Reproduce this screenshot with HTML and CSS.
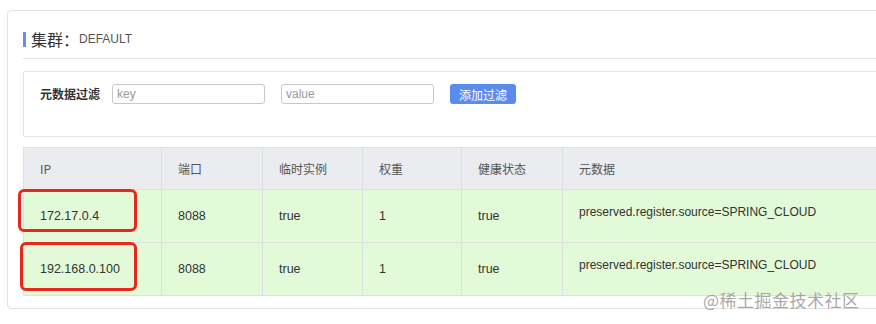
FILE: index.html
```html
<!DOCTYPE html>
<html lang="zh-CN">
<head>
    <meta charset="UTF-8">
    <title>集群详情</title>
    <link rel="stylesheet" href="styles.css">
</head>
<body>
    <div class="panel">
        <div class="cluster-title">
            <span class="bar"></span>
            <span class="label">集群：</span>
            <span class="name">DEFAULT</span>
        </div>

        <!-- 元数据过滤 -->
        <div class="filter-box">
            <span class="filter-label">元数据过滤</span>
            <input type="text" class="filter-input" placeholder="key">
            <input type="text" class="filter-input" placeholder="value">
            <button class="btn-add">添加过滤</button>
        </div>

        <table class="instance-table">
            <colgroup>
                <col style="width: 138px">
                <col style="width: 101px">
                <col style="width: 100px">
                <col style="width: 99px">
                <col style="width: 101px">
                <col>
            </colgroup>
            <thead>
                <tr>
                    <th>IP</th>
                    <th>端口</th>
                    <th>临时实例</th>
                    <th>权重</th>
                    <th>健康状态</th>
                    <th>元数据</th>
                </tr>
            </thead>
            <tbody>
                <tr>
                    <td class="ip-cell">172.17.0.4<span class="mark mark-1"></span></td>
                    <td>8088</td>
                    <td>true</td>
                    <td>1</td>
                    <td>true</td>
                    <td class="meta">preserved.register.source=SPRING_CLOUD</td>
                </tr>
                <tr>
                    <td class="ip-cell">192.168.0.100<span class="mark mark-2"></span></td>
                    <td>8088</td>
                    <td>true</td>
                    <td>1</td>
                    <td>true</td>
                    <td class="meta">preserved.register.source=SPRING_CLOUD</td>
                </tr>
            </tbody>
        </table>
    </div>

    <div class="watermark">@稀土掘金技术社区</div>
</body>
</html>
```

FILE: styles.css
```css
body {
    margin: 0;
    padding: 0;
    background-color: #fff;
    font-family: "Liberation Sans", "Noto Sans CJK SC", sans-serif;
    font-size: 12px;
    color: #333;
    width: 876px;
    height: 324px;
    overflow: hidden;
    position: relative;
}

.panel {
    margin: 10px 0 0 7px;
    width: 920px;
    border: 1px solid #e2e2e2;
    border-radius: 4px;
    padding: 20px 0 12px 15px;
    box-sizing: border-box;
}

.cluster-title {
    display: flex;
    align-items: center;
    height: 16px;
    padding-bottom: 11px;
    border-bottom: 1px solid #e4e4e4;
}

.cluster-title .bar {
    width: 3px;
    height: 15px;
    background-color: #6a8ef0;
    margin-right: 5px;
}

.cluster-title .label {
    font-size: 16px;
    color: #333;
    font-family: "Noto Sans CJK SC", sans-serif;
}

.cluster-title .name {
    font-size: 12px;
    color: #555;
}

.filter-box {
    margin-top: 12px;
    height: 66px;
    border: 1px solid #e2e2e2;
    border-radius: 2px;
    padding: 12px 0 0 16px;
    box-sizing: border-box;
    display: flex;
    align-items: flex-start;
}

.filter-label {
    font-family: "Noto Sans CJK SC", sans-serif;
    font-weight: bold;
    font-size: 12px;
    color: #333;
    line-height: 20px;
    width: 72px;
}

.filter-input {
    width: 153px;
    height: 20px;
    box-sizing: border-box;
    border: 1px solid #c8c8c8;
    border-radius: 3px;
    padding: 0 4px;
    margin: 0 16px 0 0;
    font-family: "Liberation Sans", sans-serif;
    font-size: 12px;
    outline: none;
}

.filter-input::placeholder {
    color: #999;
}

.btn-add {
    width: 66px;
    height: 20px;
    border: none;
    border-radius: 3px;
    background-color: #5a8cee;
    color: #fff;
    font-family: "Noto Sans CJK SC", sans-serif;
    font-size: 12px;
    padding: 0;
    cursor: pointer;
}

.instance-table {
    margin-top: 10px;
    width: 100%;
    border-collapse: collapse;
    table-layout: fixed;
}

.instance-table thead tr {
    height: 42px;
}

.instance-table tbody tr {
    height: 53px;
}

.instance-table th,
.instance-table td {
    border: 1px solid #dcdfe4;
    text-align: left;
    padding: 0 0 0 16px;
    font-weight: normal;
    white-space: nowrap;
}

.instance-table th {
    background-color: #eaecf0;
    color: #555;
    font-family: "Noto Sans CJK SC", "Liberation Sans", sans-serif;
}

.instance-table td {
    background-color: #e2fad8;
    color: #333;
    font-size: 12.5px;
}

.instance-table td.meta {
    vertical-align: top;
    padding-top: 13px;
    line-height: 18px;
    font-size: 12px;
}

.ip-cell {
    position: relative;
}

.mark {
    position: absolute;
    border: 3px solid #e8271f;
    border-radius: 6px;
    box-sizing: border-box;
}

.mark-1 {
    left: -6px;
    top: -1px;
    width: 119px;
    height: 43px;
}

.mark-2 {
    left: -4px;
    top: -1px;
    width: 117px;
    height: 49px;
}

.watermark {
    position: absolute;
    left: 703px;
    top: 287px;
    font-family: "Noto Sans CJK SC", sans-serif;
    font-size: 17px;
    color: rgba(140, 140, 140, 0.75);
    letter-spacing: 0.5px;
}
```
